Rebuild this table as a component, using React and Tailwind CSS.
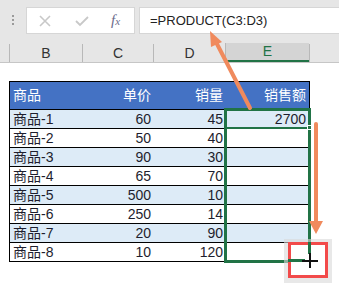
import React from "react";

const rows = [
  ["商品-1", 60, 45, 2700],
  ["商品-2", 50, 40, ""],
  ["商品-3", 90, 30, ""],
  ["商品-4", 65, 70, ""],
  ["商品-5", 500, 10, ""],
  ["商品-6", 250, 14, ""],
  ["商品-7", 20, 90, ""],
  ["商品-8", 10, 120, ""],
];

const cellFont = { fontFamily: '"Liberation Sans", "Noto Sans CJK SC", sans-serif' };

export default function App() {
  return (
    <div className="relative w-[339px] h-[297px] bg-white overflow-hidden" style={cellFont}>
      {/* Formula bar */}
      <div className="h-[40px] bg-[#e6e6e6] flex items-start pt-[7px]">
        <div className="w-[26px] flex flex-col items-center gap-[2px] pt-[8px]">
          <span className="w-[2px] h-[2px] bg-[#9a9a9a]" />
          <span className="w-[2px] h-[2px] bg-[#9a9a9a]" />
          <span className="w-[2px] h-[2px] bg-[#9a9a9a]" />
        </div>
        <div className="w-[109px] h-[27px] bg-white border border-[#d6d6d6] flex items-center">
          <svg width="12" height="12" viewBox="0 0 12 12" className="ml-[12px]">
            <path d="M1 1 L11 11 M11 1 L1 11" stroke="#c8c8c8" strokeWidth="1.6" />
          </svg>
          <svg width="14" height="12" viewBox="0 0 14 12" className="ml-[24px]">
            <path d="M1 6 L5 10 L13 2" stroke="#c8c8c8" strokeWidth="1.8" fill="none" />
          </svg>
          <span className="ml-[22px] text-[15px] italic text-[#6b6b8b]" style={{ fontFamily: '"Liberation Serif", serif' }}>
            f<span className="text-[11px]">x</span>
          </span>
        </div>
        <div className="ml-[4px] flex-1 h-[27px] bg-white border border-[#d6d6d6] border-r-0 flex items-center pl-[10px] text-[13px] text-[#222]">
          =PRODUCT(C3:D3)
        </div>
      </div>

      {/* Column headers */}
      <div className="h-[23px] bg-[#e6e6e6] border-b border-[#c6c6c6] flex items-end text-[14px] text-[#333]">
        <div className="w-[9px]" />
        <div className="w-[73px] h-[18px] border-l border-[#b8b8b8] flex items-center justify-center">B</div>
        <div className="w-[71px] h-[18px] border-l border-[#b8b8b8] flex items-center justify-center">C</div>
        <div className="w-[72px] h-[18px] border-l border-[#b8b8b8] flex items-center justify-center">D</div>
        <div className="w-[84px] h-[19px] border-l border-[#b8b8b8] bg-[#d4d4d4] border-b-2 border-b-[#217346] flex items-center justify-center text-[#217346]">E</div>
        <div className="w-[30px] h-[18px] border-l border-[#b8b8b8]" />
      </div>

      {/* Table */}
      <div className="ml-[9px] mt-[18px] w-[301px] border border-black text-[14px] text-[#1e1e2e]">
        <div className="h-[27px] bg-[#4472c4] text-white grid grid-cols-[73px_71px_72px_83px] items-end pb-[3px]">
          <div className="pl-[3px]">商品</div>
          <div className="text-right pr-[3px]">单价</div>
          <div className="text-right pr-[3px]">销量</div>
          <div className="text-right pr-[3px]">销售额</div>
        </div>
        {rows.map((r, i) => (
          <div
            key={i}
            className={`h-[19px] grid grid-cols-[73px_71px_72px_83px] items-center leading-[18px] border-t border-black ${
              i % 2 === 0 ? "bg-[#ddebf7]" : "bg-white"
            }`}
          >
            <div className="pl-[3px]">{r[0]}</div>
            <div className="text-right pr-[3px]">{r[1]}</div>
            <div className="text-right pr-[3px]">{r[2]}</div>
            <div className="text-right pr-[3px]">{r[3]}</div>
          </div>
        ))}
      </div>

      {/* Selection */}
      <div className="absolute left-[224px] top-[108px] w-[87px] h-[155px] border-[3px] border-[#217346]" />
      <div className="absolute left-[224px] top-[127px] w-[86px] h-[2px] bg-[#217346]" />
      <div className="absolute left-[307px] top-[125px] w-[5px] h-[5px] bg-[#217346] border border-white" />

      {/* Fill handle cursor box */}
      <div className="absolute left-[284px] top-[239px] w-[48px] h-[44px] bg-[#d9d9d9]/60" />
      <div className="absolute left-[288px] top-[242px] w-[40px] h-[36px] bg-white border-[3px] border-[#f24a4a]" />
      <div className="absolute left-[288px] top-[259px] w-[17px] h-[3px] bg-[#217346]" />
      <div className="absolute left-[308px] top-[242px] w-[3px] h-[12px] bg-[#217346]" />

      {/* Arrows */}
      <svg className="absolute left-0 top-0" width="339" height="297" viewBox="0 0 339 297">
        <g stroke="#f08a5d" strokeWidth="4" fill="#f08a5d" strokeLinecap="round">
          <line x1="250" y1="108" x2="216" y2="42" />
          <polygon points="210,31 222,42 211,47" stroke="none" />
          <line x1="316" y1="124" x2="316" y2="222" />
          <polygon points="309,221 323,221 316,234" stroke="none" />
        </g>
        <g stroke="#111" strokeWidth="2">
          <line x1="310" y1="253" x2="310" y2="268" />
          <line x1="302" y1="261" x2="318" y2="261" />
        </g>
      </svg>
    </div>
  );
}
